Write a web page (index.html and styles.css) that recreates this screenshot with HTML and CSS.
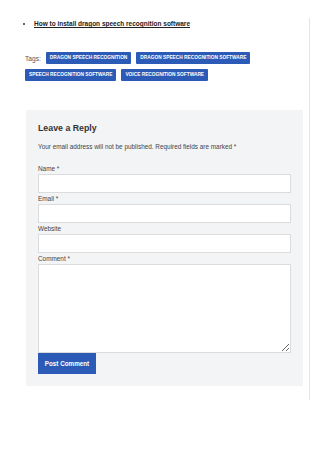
FILE: index.html
```html
<!DOCTYPE html>
<html lang="en">
  <head>
    <meta charset="UTF-8" />
    <meta name="viewport" content="width=device-width, initial-scale=1.0" />
    <title>Leave a Reply</title>
    <link rel="stylesheet" href="styles.css">
  </head>
  <body>
    <div class="page">
      <main class="main">
        <ul class="related">
          <li><a href="#">How to install dragon speech recognition software </a></li>
        </ul>

        <div class="tags">
          <span class="tags-label">Tags:</span>
          <a class="tag" href="#">Dragon speech recognition</a>
          <a class="tag" href="#">Dragon speech recognition software</a>
          <a class="tag" href="#">Speech recognition software</a>
          <a class="tag" href="#">voice recognition software</a>
        </div>

        <div class="reply-box">
          <h3>Leave a Reply</h3>
          <p class="note">Your email address will not be published. Required fields are marked *</p>
          <form id="commentForm" action="#" method="post">
            <label for="author">Name *</label>
            <input type="text" id="author" name="author" required />
            <label for="email">Email *</label>
            <input type="email" id="email" name="email" required />
            <label for="url">Website</label>
            <input type="url" id="url" name="url" />
            <label for="comment">Comment *</label>
            <textarea id="comment" name="comment" required></textarea>
            <button type="submit">Post Comment</button>
          </form>
        </div>
      </main>
      <aside class="sidebar"></aside>
    </div>
  </body>
</html>
```

FILE: styles.css
```css
body {
  font-family: "Liberation Sans", Arial, sans-serif;
  margin: 0;
  background: #fff;
  color: #333;
}
.page {
  display: flex;
}
.main {
  width: 309px;
  padding-top: 19px;
}
.sidebar {
  width: 10px;
  margin-top: 18px;
  height: 382px;
  border-left: 1px solid #e4e4e4;
}
.related {
  margin: 0;
  padding-left: 34px;
  font-size: 6.5px;
  line-height: 10px;
}
.related a {
  color: #222;
  font-weight: bold;
}
.tags {
  display: flex;
  flex-wrap: wrap;
  align-items: center;
  gap: 5px;
  margin: 23px 0 0 25px;
  width: 240px;
}
.tags-label {
  font-size: 6.6px;
  color: #555;
}
.tag {
  display: block;
  background-color: #2b5bb7;
  color: #fff;
  text-decoration: none;
  text-transform: uppercase;
  font-weight: bold;
  font-size: 4.8px;
  line-height: 12px;
  padding: 0 4px;
  border-radius: 1px;
}
.reply-box {
  margin: 29px 0 0 26px;
  width: 277px;
  box-sizing: border-box;
  padding: 13px 12px 12px;
  background-color: #f3f4f6;
}
.reply-box h3 {
  margin: 0;
  font-size: 8.8px;
  line-height: 11px;
  color: #333;
}
.note {
  margin: 8px 0 12px;
  font-size: 6.4px;
  line-height: 9px;
  color: #444;
}
form {
  display: flex;
  flex-direction: column;
}
label {
  font-size: 6.4px;
  line-height: 11px;
  color: #444;
}
input,
textarea {
  box-sizing: border-box;
  width: 253px;
  height: 19px;
  margin: 0;
  border: 1px solid #dcdcdc;
  background: #fff;
  font-size: 6px;
}
textarea {
  height: 89px;
}
button {
  align-self: flex-start;
  width: 58px;
  height: 21px;
  padding: 0;
  background-color: #2b5bb7;
  color: white;
  border: none;
  font-family: inherit;
  font-weight: bold;
  font-size: 6.3px;
  cursor: pointer;
}
button:hover {
  background-color: #234c99;
}
```
